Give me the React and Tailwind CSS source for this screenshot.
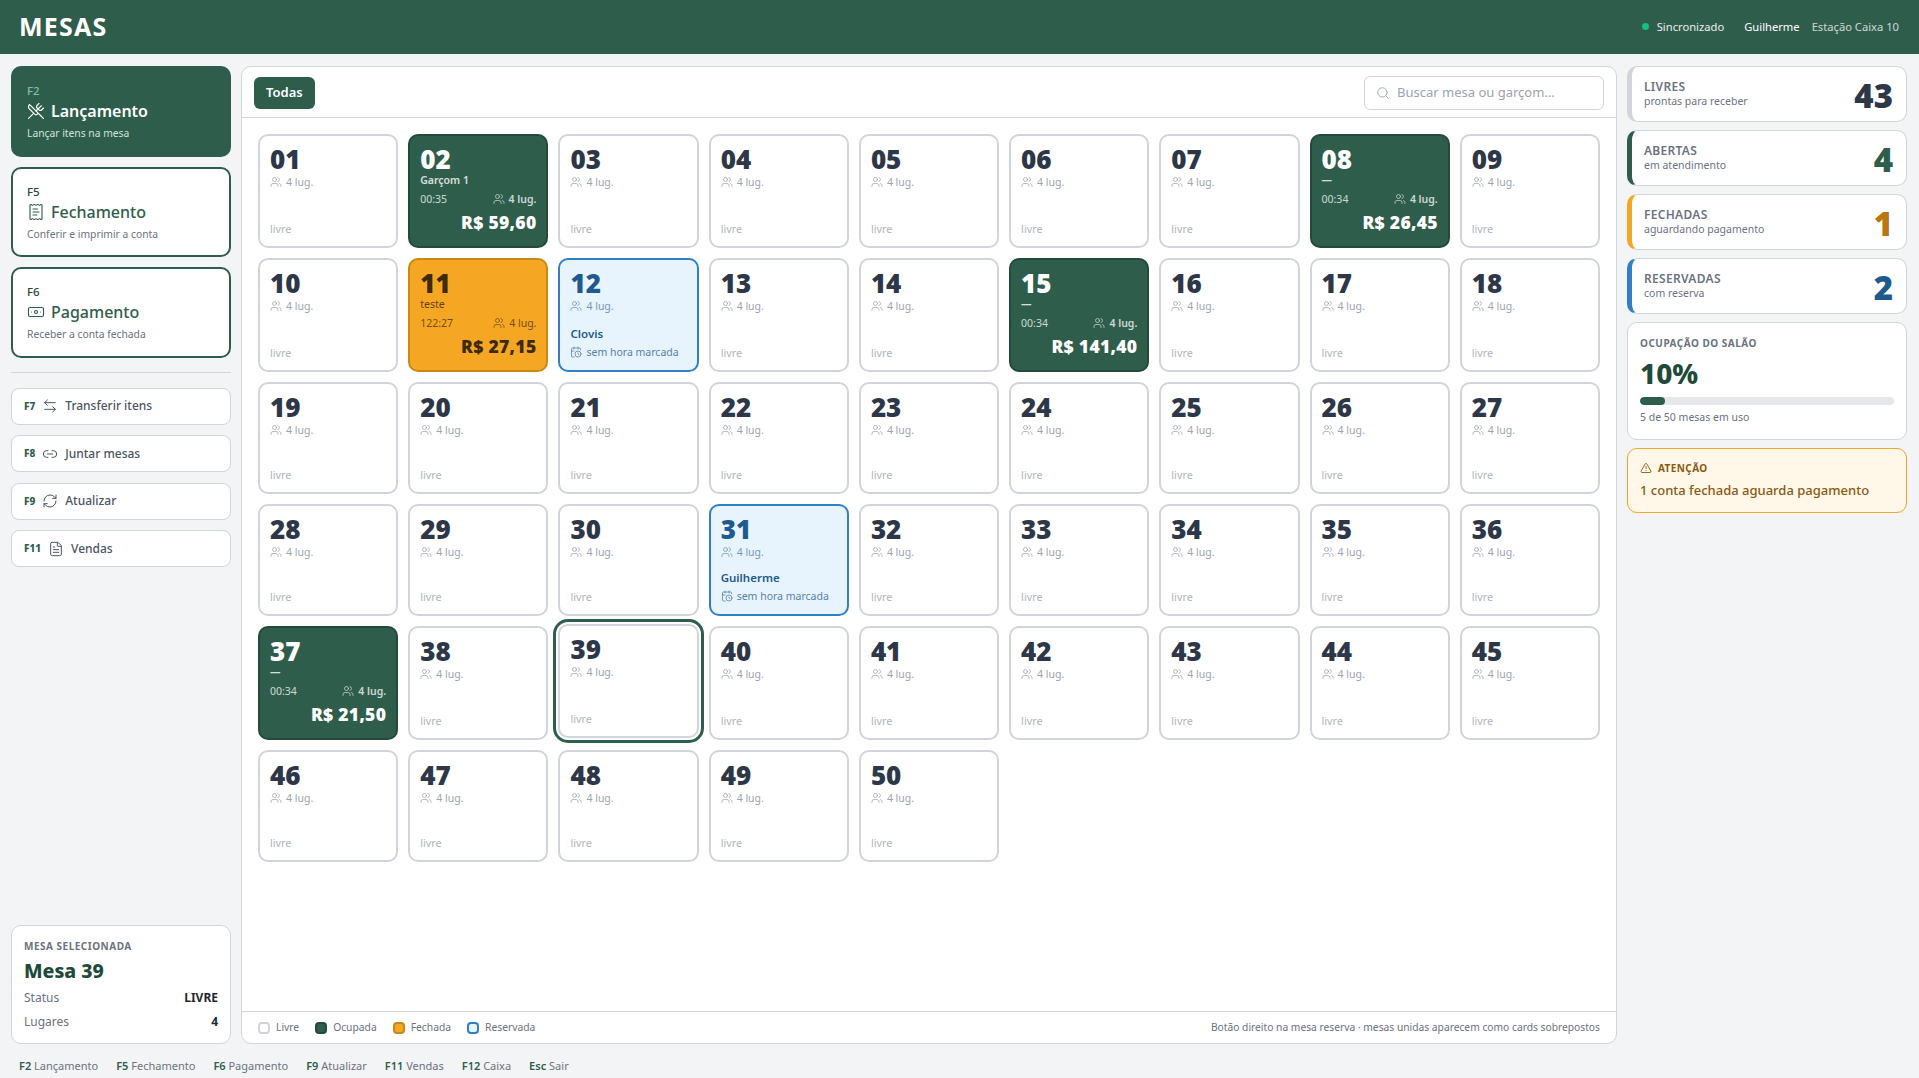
import React from "react";
import {
  Search,
  Users,
  UtensilsCrossed,
  ReceiptText,
  Banknote,
  ArrowLeftRight,
  Link2,
  RefreshCw,
  FileText,
  CalendarClock,
  TriangleAlert,
} from "lucide-react";

const occupied = {
  2: { name: "Garçom 1", time: "00:35", total: "R$ 59,60" },
  8: { name: "—", time: "00:34", total: "R$ 26,45" },
  15: { name: "—", time: "00:34", total: "R$ 141,40" },
  37: { name: "—", time: "00:34", total: "R$ 21,50" },
};
const closed = { 11: { name: "teste", time: "122:27", total: "R$ 27,15" } };
const reserved = { 12: "Clovis", 31: "Guilherme" };

const mesas = Array.from({ length: 50 }, (_, i) => i + 1);

function pad(n) {
  return String(n).padStart(2, "0");
}

function OpenCard({ n, data, tone }) {
  const isClosed = tone === "closed";
  return (
    <div
      className={`flex min-h-[114px] flex-col rounded-[10px] border-2 px-[10px] pt-[9px] pb-2 ${
        isClosed
          ? "border-[#c98a14] bg-[#f5a623] text-[#3d2a06]"
          : "border-[#244a3c] bg-[#2f5d4c] text-white"
      }`}>
      <div className="text-[26px] leading-[29px] font-black">{pad(n)}</div>
      <div
        className={`text-[10.5px] leading-[13px] ${
          isClosed ? "font-normal opacity-80" : "font-semibold opacity-80"
        }`}>
        {data.name}
      </div>
      <div
        className={`mt-1 flex items-center justify-between text-[10.5px] leading-4 ${
          isClosed ? "opacity-70" : "opacity-75"
        }`}>
        <span>{data.time}</span>
        <span className={`flex items-center gap-1 ${isClosed ? "" : "font-semibold"}`}>
          <Users className="h-3 w-3" strokeWidth={1.5} />4 lug.
        </span>
      </div>
      <div className="mt-1 text-right text-[17.5px] leading-[22px] font-black tracking-[0.3px]">
        {data.total}
      </div>
    </div>
  );
}

function ReservedCard({ n, name }) {
  return (
    <div className="flex min-h-[112px] flex-col rounded-[10px] border-2 border-[#2f80c9] bg-[#e8f4fd] px-[10px] pt-[9px] pb-[10px] text-[#1f5a8f]">
      <div className="text-[26px] leading-[29px] font-black">{pad(n)}</div>
      <div className="flex items-center gap-1 text-[10.5px] leading-4 opacity-60">
        <Users className="h-3 w-3" strokeWidth={1.5} />4 lug.
      </div>
      <div className="mt-auto text-[11.5px] leading-4 font-semibold">{name}</div>
      <div className="mt-[2px] flex items-center gap-1 text-[10.5px] leading-4 opacity-75">
        <CalendarClock className="h-3 w-3" strokeWidth={1.5} />
        sem hora marcada
      </div>
    </div>
  );
}

function FreeCard({ n, selected }) {
  return (
    <div
      className={`flex min-h-[112px] flex-col rounded-[10px] border-2 border-[#d1d5db] bg-white px-[10px] pt-[9px] pb-[9px] ${
        selected ? "-translate-y-0.5 outline-[3px] outline-offset-2 outline-[#2f5d4c]" : ""
      }`}>
      <div className="text-[26px] leading-[29px] font-black text-[#2d3748]">{pad(n)}</div>
      <div className="flex items-center gap-1 text-[10.5px] leading-4 text-[#9ca3af]">
        <Users className="h-3 w-3" strokeWidth={1.5} />4 lug.
      </div>
      <div className="mt-auto text-[10.8px] leading-4 text-[#b0b5bd]">livre</div>
    </div>
  );
}

function MainAction({ fkey, title, desc, Icon, active }) {
  return (
    <button
      className={`flex h-[90.5px] w-full flex-col justify-center rounded-[10px] border-2 border-[#2f5d4c] px-[14px] pt-[2px] text-left ${
        active ? "bg-[#2f5d4c]" : "bg-white"
      }`}>
      <span
        className={`text-[11.5px] leading-4 font-medium ${
          active ? "text-[#7fc0a3]" : "text-[#1f4a3a]"
        }`}>
        {fkey}
      </span>
      <span
        className={`flex items-center gap-[6px] text-[16px] leading-6 ${
          active ? "font-semibold text-white" : "font-medium text-[#2f5d4c]"
        }`}>
        <Icon className="h-[18px] w-[18px]" strokeWidth={1.5} />
        {title}
      </span>
      <span
        className={`mt-[2px] text-[10.3px] leading-4 ${
          active ? "text-[#cfe3da]" : "text-[#6b7280]"
        }`}>
        {desc}
      </span>
    </button>
  );
}

function SmallAction({ fkey, label, Icon }) {
  return (
    <button className="flex h-[37px] w-full items-center gap-[7px] rounded-lg border border-[#d1d5db] bg-white px-[12px] text-[12px] font-medium text-[#4b5563]">
      <span className="text-[10px] font-extrabold text-[#2f5d4c]">{fkey}</span>
      <Icon className="h-4 w-4" strokeWidth={1.5} />
      {label}
    </button>
  );
}

function StatCard({ label, sub, value, bar, color }) {
  return (
    <div
      className={`flex h-[56px] items-center justify-between rounded-[10px] border border-l-[5px] border-[#d1d5db] bg-white pr-[13px] pl-3 ${bar}`}>
      <div>
        <div className="text-[12px] leading-[15px] font-semibold tracking-[0.3px] text-[#6b7280]">
          {label}
        </div>
        <div className="text-[10.5px] leading-[15px] text-[#6b7280]">{sub}</div>
      </div>
      <div className={`mt-[2px] text-[33px] leading-none font-black ${color}`}>{value}</div>
    </div>
  );
}

function LegendItem({ label, swatch }) {
  return (
    <span className="flex items-center gap-[6px]">
      <span className={`h-3 w-3 rounded-[4px] border-2 ${swatch}`} />
      {label}
    </span>
  );
}

function ShortCut({ k, label }) {
  return (
    <span>
      <b className="font-semibold text-[#2f5d4c]">{k}</b> {label}
    </span>
  );
}

export default function App() {
  return (
    <div className="flex h-screen flex-col overflow-hidden bg-[#f3f4f6] font-['Noto_Sans',sans-serif]">
      {/* Header */}
      <header className="flex h-[54px] shrink-0 items-center justify-between bg-[#2f5d4c] pr-5 pl-[19px] text-white">
        <h1 className="text-[25px] font-bold tracking-[1.2px]">MESAS</h1>
        <div className="flex items-center text-[11.2px]">
          <span className="mr-[8px] h-[7px] w-[7px] rounded-full bg-[#10c27a]" />
          <span className="mr-5 opacity-90">Sincronizado</span>
          <span className="mr-3">Guilherme</span>
          <span className="opacity-75">Estação Caixa 10</span>
        </div>
      </header>

      <div className="flex min-h-0 flex-1 gap-[10px] pt-3 pr-3 pl-[11px]">
        {/* Left column */}
        <aside className="flex w-[220px] shrink-0 flex-col">
          <div className="flex flex-col gap-[10px]">
            <MainAction fkey="F2" title="Lançamento" desc="Lançar itens na mesa" Icon={UtensilsCrossed} active />
            <MainAction fkey="F5" title="Fechamento" desc="Conferir e imprimir a conta" Icon={ReceiptText} />
            <MainAction fkey="F6" title="Pagamento" desc="Receber a conta fechada" Icon={Banknote} />
          </div>
          <div className="mt-[14px] mb-[15px] h-px bg-[#d1d5db]" />
          <div className="flex flex-col gap-[10.5px]">
            <SmallAction fkey="F7" label="Transferir itens" Icon={ArrowLeftRight} />
            <SmallAction fkey="F8" label="Juntar mesas" Icon={Link2} />
            <SmallAction fkey="F9" label="Atualizar" Icon={RefreshCw} />
            <SmallAction fkey="F11" label="Vendas" Icon={FileText} />
          </div>
          <div className="mt-auto h-[119px] rounded-[10px] border border-[#d1d5db] bg-white px-3 pt-3">
            <div className="text-[10px] leading-4 font-bold tracking-[0.5px] text-[#6b7280]">
              MESA SELECIONADA
            </div>
            <div className="mt-[3px] text-[19.5px] leading-[28px] font-extrabold text-[#1f4a3a]">Mesa 39</div>
            <div className="mt-[1px] flex justify-between text-[12px] leading-6 text-[#6b7280]">
              <span>Status</span>
              <b className="font-bold text-[#1f2937]">LIVRE</b>
            </div>
            <div className="flex justify-between text-[12px] leading-6 text-[#6b7280]">
              <span>Lugares</span>
              <b className="font-bold text-[#1f2937]">4</b>
            </div>
          </div>
        </aside>

        {/* Tables */}
        <main className="flex min-w-0 flex-1 flex-col rounded-[10px] border border-[#d1d5db] bg-white">
          <div className="flex h-[51px] shrink-0 items-center justify-between border-b border-[#d1d5db] pt-px pr-3 pl-3">
            <button className="h-8 rounded-md bg-[#2f5d4c] px-3 text-[13px] font-semibold text-white">Todas</button>
            <div className="flex h-[34px] w-[240px] items-center gap-[7px] rounded-md border border-[#d1d5db] px-[11px] text-[13px] text-[#9ca3af]">
              <Search className="h-[14px] w-[14px]" strokeWidth={1.6} />
              Buscar mesa ou garçom...
            </div>
          </div>
          <div className="grid min-h-0 flex-1 grid-cols-9 content-start gap-[10px] p-4">
            {mesas.map((n) => {
              if (occupied[n]) return <OpenCard key={n} n={n} data={occupied[n]} tone="open" />;
              if (closed[n]) return <OpenCard key={n} n={n} data={closed[n]} tone="closed" />;
              if (reserved[n]) return <ReservedCard key={n} n={n} name={reserved[n]} />;
              return <FreeCard key={n} n={n} selected={n === 39} />;
            })}
          </div>
          <div className="flex h-[32px] shrink-0 items-center justify-between border-t border-[#d1d5db] px-4 text-[10.25px] text-[#6b7280]">
            <div className="flex items-center gap-4 text-[10.3px]">
              <LegendItem label="Livre" swatch="border-[#d1d5db] bg-white" />
              <LegendItem label="Ocupada" swatch="border-[#244a3c] bg-[#2f5d4c]" />
              <LegendItem label="Fechada" swatch="border-[#c98a14] bg-[#f5a623]" />
              <LegendItem label="Reservada" swatch="border-[#2f80c9] bg-[#e8f4fd]" />
            </div>
            <span>Botão direito na mesa reserva · mesas unidas aparecem como cards sobrepostos</span>
          </div>
        </main>

        {/* Right column */}
        <aside className="flex w-[280px] shrink-0 flex-col gap-2">
          <StatCard label="LIVRES" sub="prontas para receber" value="43" bar="border-l-[#d1d5db]" color="text-[#2d3748]" />
          <StatCard label="ABERTAS" sub="em atendimento" value="4" bar="border-l-[#2f5d4c]" color="text-[#2f5d4c]" />
          <StatCard label="FECHADAS" sub="aguardando pagamento" value="1" bar="border-l-[#f5a623]" color="text-[#b9770e]" />
          <StatCard label="RESERVADAS" sub="com reserva" value="2" bar="border-l-[#2f80c9]" color="text-[#1f5a8f]" />
          <div className="h-[118px] rounded-[10px] border border-[#d1d5db] bg-white px-3 pt-3">
            <div className="text-[10px] leading-4 font-bold tracking-[0.5px] text-[#6b7280]">OCUPAÇÃO DO SALÃO</div>
            <div className="mt-1 text-[28px] leading-[36px] font-extrabold text-[#1f4a3a]">10%</div>
            <div className="mt-[6px] h-2 overflow-hidden rounded-full bg-[#e5e7eb]">
              <div className="h-full rounded-full bg-[#2f5d4c]" style={{ width: "10%" }} />
            </div>
            <div className="mt-1 text-[10.5px] leading-4 text-[#6b7280]">5 de 50 mesas em uso</div>
          </div>
          <div className="h-[65px] rounded-[10px] border border-[#f5a623] bg-[#fff7e8] px-3 pt-[11px]">
            <div className="flex items-center gap-[6px] text-[10px] leading-4 font-bold tracking-[0.4px] text-[#8a5a12]">
              <TriangleAlert className="h-3 w-3" strokeWidth={1.8} />
              ATENÇÃO
            </div>
            <div className="mt-[5px] text-[13px] leading-[18px] font-medium text-[#8a5a12]">
              1 conta fechada aguarda pagamento
            </div>
          </div>
        </aside>
      </div>

      {/* Shortcuts */}
      <footer className="flex h-[34px] shrink-0 items-center gap-[18px] pt-[10px] pl-[19px] text-[11px] text-[#6b7280]">
        <ShortCut k="F2" label="Lançamento" />
        <ShortCut k="F5" label="Fechamento" />
        <ShortCut k="F6" label="Pagamento" />
        <ShortCut k="F9" label="Atualizar" />
        <ShortCut k="F11" label="Vendas" />
        <ShortCut k="F12" label="Caixa" />
        <ShortCut k="Esc" label="Sair" />
      </footer>
    </div>
  );
}
